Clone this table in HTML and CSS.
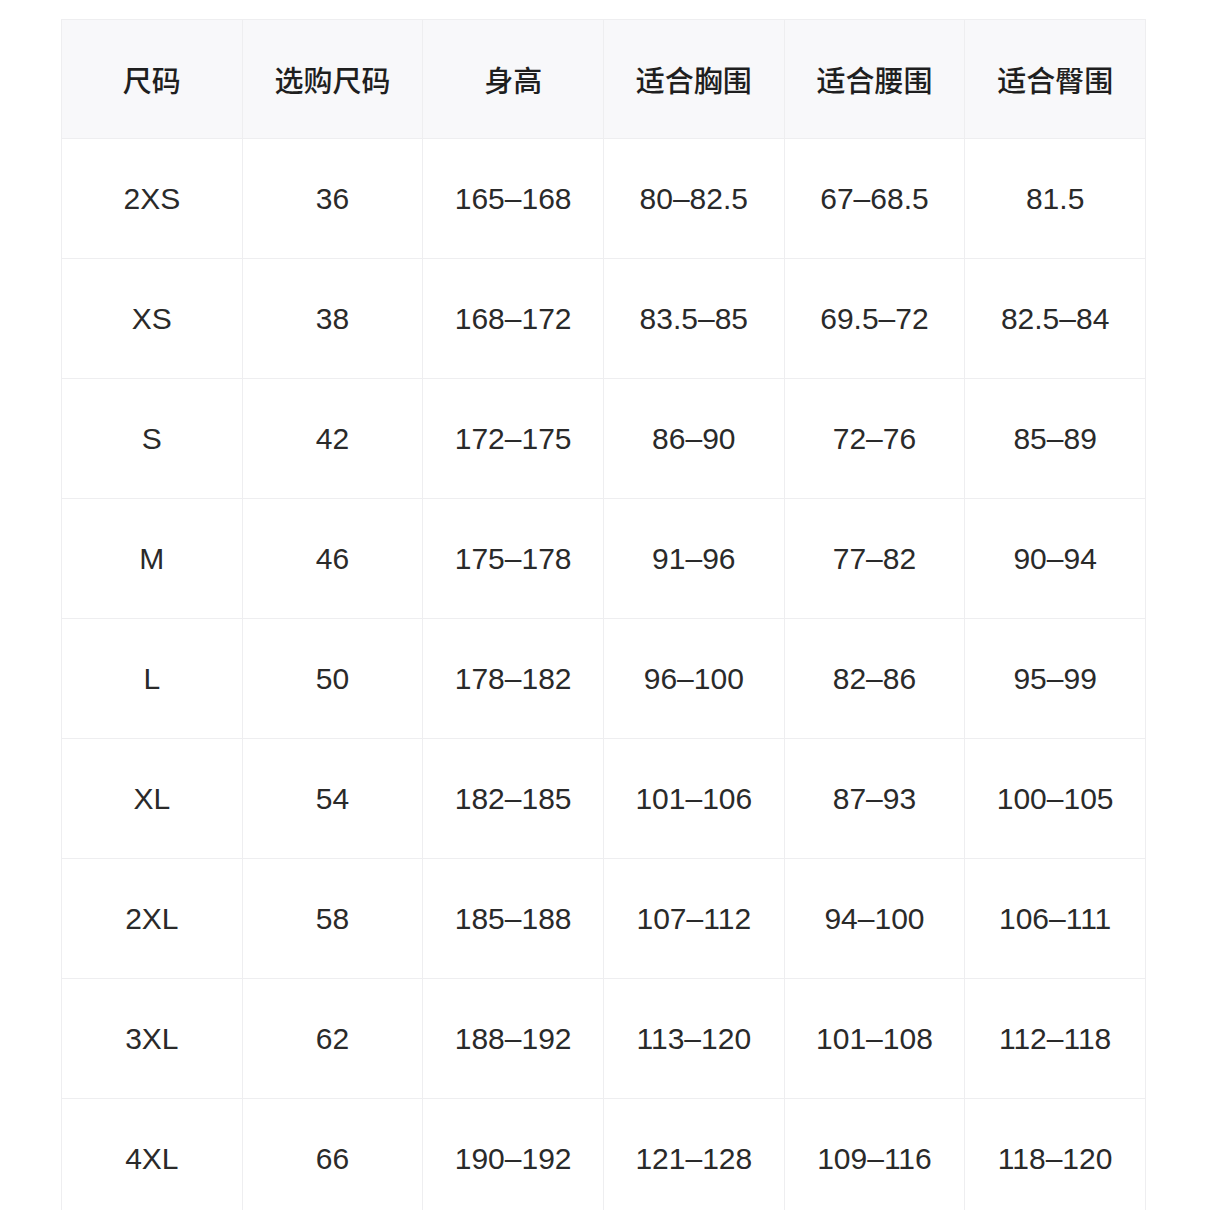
FILE: index.html
```html
<!DOCTYPE html>
<html lang="zh-CN">
<head>
<meta charset="utf-8">
<link rel="stylesheet" href="styles.css">
</head>
<body>
<div class="wrap">
<table class="size-table">
<thead>
<tr><th>尺码</th><th>选购尺码</th><th>身高</th><th>适合胸围</th><th>适合腰围</th><th>适合臀围</th></tr>
</thead>
<tbody>
<tr><td>2XS</td><td>36</td><td>165–168</td><td>80–82.5</td><td>67–68.5</td><td>81.5</td></tr>
<tr><td>XS</td><td>38</td><td>168–172</td><td>83.5–85</td><td>69.5–72</td><td>82.5–84</td></tr>
<tr><td>S</td><td>42</td><td>172–175</td><td>86–90</td><td>72–76</td><td>85–89</td></tr>
<tr><td>M</td><td>46</td><td>175–178</td><td>91–96</td><td>77–82</td><td>90–94</td></tr>
<tr><td>L</td><td>50</td><td>178–182</td><td>96–100</td><td>82–86</td><td>95–99</td></tr>
<tr><td>XL</td><td>54</td><td>182–185</td><td>101–106</td><td>87–93</td><td>100–105</td></tr>
<tr><td>2XL</td><td>58</td><td>185–188</td><td>107–112</td><td>94–100</td><td>106–111</td></tr>
<tr><td>3XL</td><td>62</td><td>188–192</td><td>113–120</td><td>101–108</td><td>112–118</td></tr>
<tr><td>4XL</td><td>66</td><td>190–192</td><td>121–128</td><td>109–116</td><td>118–120</td></tr>
</tbody>
</table>
</div>
</body>
</html>
```
FILE: styles.css
```css
html, body {
  margin: 0;
  padding: 0;
  background: #ffffff;
}
.wrap {
  padding: 19px 60px 0 61px;
}
.size-table {
  width: 100%;
  border-collapse: collapse;
  table-layout: fixed;
  font-family: "Liberation Sans", "Noto Sans CJK SC", sans-serif;
  color: #262626;
}
.size-table th,
.size-table td {
  border: 1px solid #eeeef0;
  text-align: center;
  vertical-align: middle;
  padding: 0;
}
.size-table th {
  height: 118px;
  background: #f8f8fa;
  font-family: "Noto Sans CJK SC", sans-serif;
  font-weight: 500;
  font-size: 29px;
  color: #1f1f1f;
}
.size-table td {
  height: 119px;
  font-size: 30px;
  font-weight: 400;
  color: #2a2a2a;
}
```
